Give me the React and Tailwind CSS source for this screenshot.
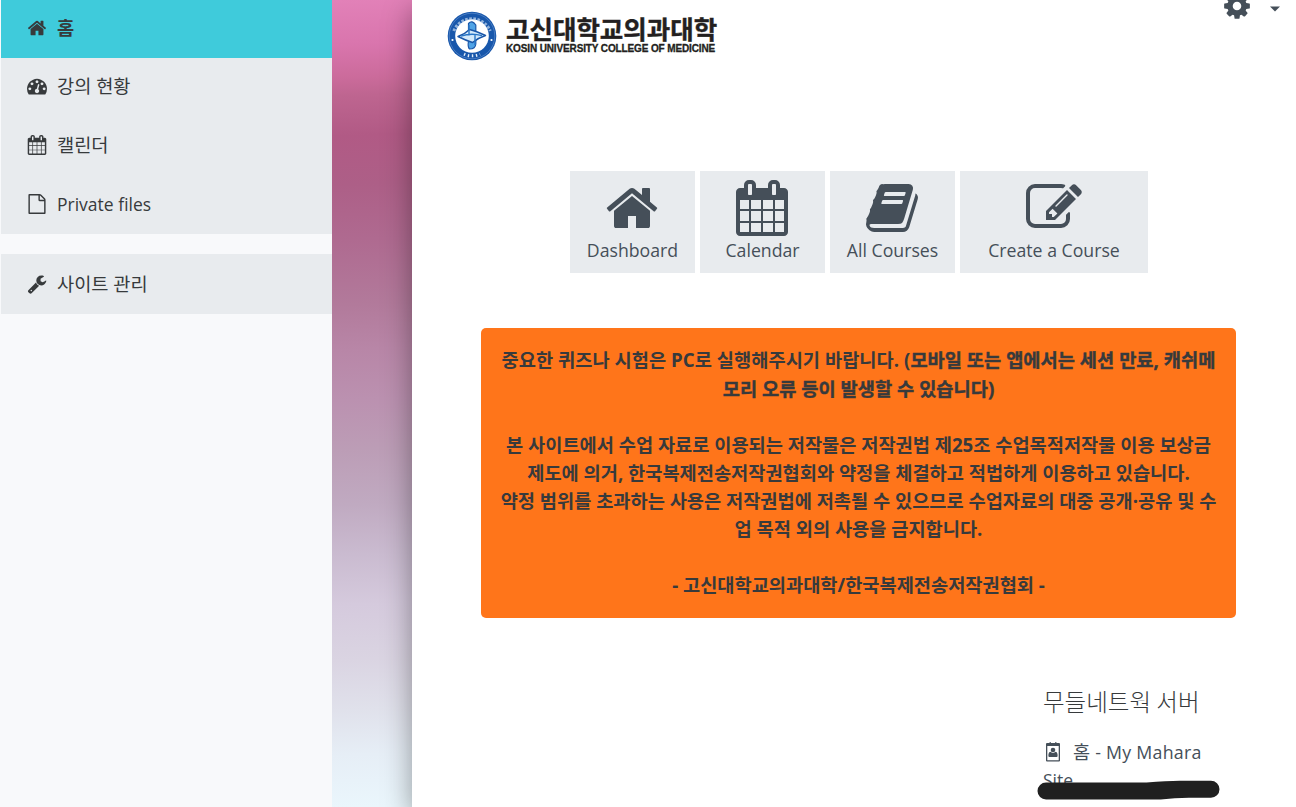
import React from "react";

const ICONS = {
  home: "M1472 992v480q0 26-19 45t-45 19h-384v-384h-256v384h-384q-26 0-45-19t-19-45v-480q0-1 .5-3t.5-3l575-474 575 474q1 2 1 6zm223-69l-62 74q-8 9-21 11h-3q-13 0-21-7l-692-577-692 577q-12 8-24 7-13-2-21-11l-62-74q-8-10-7-23.5t11-21.5l719-599q32-26 76-26t76 26l244 204v-195q0-14 9-23t23-9h192q14 0 23 9t9 23v408l219 182q10 8 11 21.5t-7 23.5z",
  calendar: "M192 1664h288v-288h-288v288zm352 0h320v-288h-320v288zm-352-352h288v-320h-288v320zm352 0h320v-320h-320v320zm-352-384h288v-288h-288v288zm736 736h320v-288h-320v288zm-384-736h320v-288h-320v288zm768 736h288v-288h-288v288zm-384-352h320v-320h-320v320zm-352-864v-288q0-13-9.5-22.5t-22.5-9.5h-64q-13 0-22.5 9.5t-9.5 22.5v288q0 13 9.5 22.5t22.5 9.5h64q13 0 22.5-9.5t9.5-22.5zm736 864h288v-320h-288v320zm-384-384h320v-288h-320v288zm384 0h288v-288h-288v288zm32-480v-288q0-13-9.5-22.5t-22.5-9.5h-64q-13 0-22.5 9.5t-9.5 22.5v288q0 13 9.5 22.5t22.5 9.5h64q13 0 22.5-9.5t9.5-22.5zm384-64v1280q0 52-38 90t-90 38h-1408q-52 0-90-38t-38-90v-1280q0-52 38-90t90-38h128v-96q0-66 47-113t113-47h64q66 0 113 47t47 113v96h384v-96q0-66 47-113t113-47h64q66 0 113 47t47 113v96h128q52 0 90 38t38 90z",
  book: "M1703 478q40 57 18 129l-275 906q-19 64-76.5 107.5t-122.5 43.5h-923q-77 0-148.5-53.5t-99.5-131.5q-24-67-2-127 0-4 3-27t4-37q1-8-3-21.5t-3-19.5q2-11 8-21t16.5-23.5 16.5-23.5q23-38 45-91.5t30-91.5q3-10 .5-30t-.5-28q3-11 17-28t17-23q21-36 42-92t25-90q1-9-2.5-32t.5-28q4-13 22-30.5t22-22.5q19-26 42.5-84.5t27.5-96.5q1-8-3-25.5t-2-26.5q2-8 9-18t18-23 17-21q8-12 16.5-30.5t15-35 16-36 19.5-32 26.5-23.5 36-11.5 47.5 5.5l-1 3q38-9 51-9h761q74 0 114 56t18 130l-274 906q-36 119-71.5 153.5t-128.5 34.5h-869q-27 0-38 15-11 16-1 43 24 70 144 70h923q29 0 56-15.5t35-41.5l300-987q7-22 5-57 38 15 59 43zm-1064 2q-4 13 2 22.5t20 9.5h608q13 0 25.5-9.5t16.5-22.5l21-64q4-13-2-22.5t-20-9.5h-608q-13 0-25.5 9.5t-16.5 22.5zm-83 256q-4 13 2 22.5t20 9.5h608q13 0 25.5-9.5t16.5-22.5l21-64q4-13-2-22.5t-20-9.5h-608q-13 0-25.5 9.5t-16.5 22.5z",
  edit: "M888 1184l116-116-152-152-116 116v56h96v96h56zm440-720q-16-16-33 1l-350 350q-17 17-1 33t33-1l350-350q17-17 1-33zm80 594v190q0 119-84.5 203.5t-203.5 84.5h-832q-119 0-203.5-84.5t-84.5-203.5v-832q0-119 84.5-203.5t203.5-84.5h832q63 0 117 25 15 7 18 23 3 17-9 29l-49 49q-14 14-32 8-23-6-45-6h-832q-66 0-113 47t-47 113v832q0 66 47 113t113 47h832q66 0 113-47t47-113v-126q0-13 9-22l64-64q15-15 35-7t20 29zm-96-738l288 288-672 672h-288v-288zm444 132l-92 92-288-288 92-92q28-28 68-28t68 28l152 152q28 28 28 68t-28 68z",
  file: "M1596 380q28 28 48 76t20 88v1152q0 40-28 68t-68 28h-1344q-40 0-68-28t-28-68v-1600q0-40 28-68t68-28h896q40 0 88 20t76 48zm-444-244v376h376q-10-29-22-41l-313-313q-12-12-41-22zm384 1528v-1024h-416q-40 0-68-28t-28-68v-416h-768v1536h1280z",
  wrench: "M448 1472q0-26-19-45t-45-19-45 19-19 45 19 45 45 19 45-19 19-45zm644-420l-682 682q-37 37-90 37-52 0-91-37l-106-108q-38-36-38-90 0-53 38-91l681-681q39 98 114.5 173.5t173.5 114.5zm634-435q0 39-23 106-47 134-164.5 217.5t-258.5 83.5q-185 0-316.5-131.5t-131.5-316.5 131.5-316.5 316.5-131.5q58 0 121.5 16.5t107.5 46.5q16 11 16 28t-16 28l-293 169v224l193 107q5-3 79-48.5t135.5-81 70.5-35.5q15 0 23.5 10t8.5 25z",
  cog: "M1152 896q0-106-75-181t-181-75-181 75-75 181 75 181 181 75 181-75 75-181zm512-109v222q0 12-8 23t-20 13l-185 28q-19 54-39 91 35 50 107 138 10 12 10 25t-9 23q-27 37-99 108t-94 71q-12 0-26-9l-138-108q-44 23-91 38-16 136-29 186-7 28-36 28h-222q-14 0-24.5-8.5t-11.5-21.5l-28-184q-49-16-90-37l-141 107q-10 9-25 9-14 0-25-11-126-114-165-168-7-10-7-23 0-12 8-23 15-21 51-66.5t54-70.5q-27-50-41-99l-183-27q-13-2-21-12.5t-8-23.5v-222q0-12 8-23t19-13l186-28q14-46 39-92-40-57-107-138-10-12-10-24 0-10 9-23 26-36 98.5-107.5t94.5-71.5q13 0 26 10l138 107q44-23 91-38 16-136 29-186 7-28 36-28h222q14 0 24.5 8.5t11.5 21.5l28 184q49 16 90 37l142-107q9-9 24-9 13 0 25 10 129 119 165 170 7 8 7 22 0 12-8 23-15 21-51 66.5t-54 70.5q26 50 41 98l183 28q13 2 21 12.5t8 23.5z",
  gauge: "M384 1152q0-53-37.5-90.5t-90.5-37.5-90.5 37.5-37.5 90.5 37.5 90.5 90.5 37.5 90.5-37.5 37.5-90.5zm192-448q0-53-37.5-90.5t-90.5-37.5-90.5 37.5-37.5 90.5 37.5 90.5 90.5 37.5 90.5-37.5 37.5-90.5zm428 481l101-382q6-26-7.5-48.5t-38.5-29.5-48 6.5-30 39.5l-101 382q-60 5-107 43.5t-63 98.5q-20 77 20 146t117 89 146-20 89-117q16-60-6-117t-72-91zm660-33q0-53-37.5-90.5t-90.5-37.5-90.5 37.5-37.5 90.5 37.5 90.5 90.5 37.5 90.5-37.5 37.5-90.5zm-640-640q0-53-37.5-90.5t-90.5-37.5-90.5 37.5-37.5 90.5 37.5 90.5 90.5 37.5 90.5-37.5 37.5-90.5zm448 192q0-53-37.5-90.5t-90.5-37.5-90.5 37.5-37.5 90.5 37.5 90.5 90.5 37.5 90.5-37.5 37.5-90.5zm320 448q0 261-141 483-19 29-54 29h-1402q-35 0-54-29-141-221-141-483 0-182 71-348t191-286 286-191 348-71 348 71 286 191 191 286 71 348z",
};

function Icon({ name, className }) {
  return (
    <svg viewBox="0 0 1792 1792" fill="currentColor" className={className} aria-hidden="true">
      <path d={ICONS[name]} />
    </svg>
  );
}

function NavItem({ icon, children, className }) {
  return (
    <a className={"flex shrink-0 items-center gap-[10px] pl-[26px] whitespace-nowrap text-[#373a3c] " + className}>
      <Icon name={icon} className="size-5 shrink-0" />
      {children}
    </a>
  );
}

function Tile({ icon, label, className }) {
  return (
    <a className={"flex h-[102px] flex-col items-center bg-[#e8ebee] pt-[9px] text-[#454f59] " + className}>
      <Icon name={icon} className="mr-[1px] size-14 shrink-0" />
      <span className="whitespace-nowrap text-[17.7px] leading-[28px]">{label}</span>
    </a>
  );
}

function Emblem() {
  return (
    <svg viewBox="0 0 50 50" className="mt-[11px] size-[50px] shrink-0" aria-hidden="true">
      <circle cx="25" cy="25" r="24.3" fill="#1857ab" />
      <circle cx="25" cy="25" r="22.8" fill="none" stroke="#5b8bcb" strokeWidth=".7" />
      <circle cx="25" cy="25" r="16.8" fill="#fff" />
      <path d="M6.800 20A19.600 19.600 0 0 1 43.200 20" fill="none" stroke="#c4d8f0" strokeWidth="3" strokeDasharray="2.600 1.500" opacity=".7" />
      <path d="M17 43.200A20 20 0 0 0 33 43.200" fill="none" stroke="#e0ebf8" strokeWidth="3" strokeDasharray="1.400 2.600" />
      <g fill="#fff"><circle cx="5.500" cy="29" r="1.100" /><circle cx="44.500" cy="29" r="1.100" /></g>
      <path d="M21.500 12.500Q25 8.500 28.800 14V33Q28.500 38 22.500 38Q20.500 36 21.500 30z" fill="#4fa3e6" stroke="#1a56a8" strokeWidth="1.200" />
      <path d="M11 25.500Q18 23 22.500 18.500Q29 20 38.500 24.500Q31 27 25.500 31.500Q19 29.500 11 25.500z" fill="#d4e9fa" stroke="#1a56a8" strokeWidth="1.500" strokeLinejoin="round" />
      <path d="M22 14v10.500M28 24v10M14 25.200Q24 21.500 35 24.700" fill="none" stroke="#2874c5" strokeWidth="1.400" />
    </svg>
  );
}

export default function App() {
  return (
    <div className='flex h-[807px] w-[1296px] overflow-hidden bg-white font-["Open_Sans","Noto_Sans_CJK_KR",sans-serif] text-[18.67px] text-[#373a3c]'>
      <nav className="flex w-[332px] shrink-0 flex-col bg-[#f8f9fb] pl-px">
        <NavItem icon="home" className="h-[58px] bg-[#3fcbdb] pb-[2px] font-bold">홈</NavItem>
        <div className="flex h-[176px] flex-col bg-[#e8ebee]">
          <NavItem icon="gauge" className="h-[58px] pb-[2px]">강의 현황</NavItem>
          <NavItem icon="calendar" className="h-[59px] pb-[2px]">캘린더</NavItem>
          <NavItem icon="file" className="h-[59px] pb-[1px]"><span className="text-[17.5px]">Private files</span></NavItem>
        </div>
        <NavItem icon="wrench" className="mt-5 h-[60px] bg-[#e8ebee]">사이트 관리</NavItem>
      </nav>

      <div className="w-20 shrink-0 bg-[linear-gradient(178deg,#e281b8_0px,#d975ad_45px,#cb6b9b_78px,#be6590_96px,#b15a85_136px,#ad5f87_185px,#af6a90_240px,#b27a9b_305px,#b886a7_350px,#bb91b0_400px,#bc9db6_450px,#c0aac1_505px,#cabbd0_555px,#d5cadd_605px,#dad4e2_660px,#e0e1eb_710px,#e6eef6_755px,#eaf6fc_807px)]" />

      <main className="relative flex w-[884px] shrink-0 flex-col bg-white shadow-[0_10px_27px_rgba(0,0,0,0.38)]">
        <header className="flex h-[171px] shrink-0 items-start pl-[35px]">
          <Emblem />
          <div className="ml-[9px] mt-[14px] flex w-[215px] flex-col whitespace-nowrap text-[#231f20]">
            <span className='h-[29px] font-["Noto_Sans_CJK_KR",sans-serif] text-[25.5px] leading-[28px] font-bold [-webkit-text-stroke:0.4px_#231f20]'>고신대학교의과대학</span>
            <span className='mt-[1px] font-["Liberation_Sans",sans-serif] text-[10px] leading-[10px] font-bold tracking-[-0.13px] [-webkit-text-stroke:0.3px_#231f20]'>KOSIN UNIVERSITY COLLEGE OF MEDICINE</span>
          </div>
          <div className="-mt-[9px] ml-auto flex items-center gap-[17px] pr-[15px] text-[#454f59]">
            <Icon name="cog" className="size-[30px]" />
            <svg viewBox="0 0 12 6" className="mt-[6px] h-[6px] w-3" fill="currentColor"><path d="M1 .5h10l-5 5z" /></svg>
          </div>
        </header>

        <div className="flex gap-[5px] pl-[158px]">
          <Tile icon="home" label="Dashboard" className="w-[125px]" />
          <Tile icon="calendar" label="Calendar" className="w-[125px]" />
          <Tile icon="book" label="All Courses" className="w-[125px]" />
          <Tile icon="edit" label="Create a Course" className="w-[188px]" />
        </div>

        <section className="mt-[55px] ml-[69px] h-[290px] w-[755px] shrink-0 rounded-[5px] bg-[#ff751a] pt-[18px] text-center leading-[28px] font-bold whitespace-nowrap">
          <p className="mb-[1px] tracking-[0.04px]">중요한 퀴즈나 시험은 PC로 실행해주시기 바랍니다. (<span className="[-webkit-text-stroke:0.4px_#373a3c]">모바일 또는 앱에서는 세션 만료, 캐쉬메</span></p>
          <p className="tracking-[0.04px] [-webkit-text-stroke:0.4px_#373a3c]">모리 오류 등이 발생할 수 있습니다)</p>
          <p className="mt-[28px]">본 사이트에서 수업 자료로 이용되는 저작물은 저작권법 제25조 수업목적저작물 이용 보상금</p>
          <p>제도에 의거, 한국복제전송저작권협회와 약정을 체결하고 적법하게 이용하고 있습니다.</p>
          <p>약정 범위를 초과하는 사용은 저작권법에 저촉될 수 있으므로 수업자료의 대중 공개·공유 및 수</p>
          <p>업 목적 외의 사용을 금지합니다.</p>
          <p className="mt-[28px]">- 고신대학교의과대학/한국복제전송저작권협회 -</p>
        </section>

        <section className="mt-[66px] ml-[631px] w-[190px] text-[#454f59]">
          <h2 className='font-["Noto_Sans_CJK_KR",sans-serif] text-[23.5px] leading-[34px] font-light whitespace-nowrap text-[#373a3c]'>무들네트웍 서버</h2>
          <a className="mt-[20px] flex h-[28px] items-center whitespace-nowrap">
            <svg viewBox="0 0 16 20" className="mr-[12px] ml-[2px] h-5 w-4" fill="currentColor">
              <path fillRule="evenodd" d="M2 1H4.500V.2H6V1h4V.2h1.500V1H14q1 0 1 1v16.500q0 1-1 1H2q-1 0-1-1V2q0-1 1-1zM2.300 4v14.200h11.400V4z" />
              <circle cx="8" cy="8" r="2.300" />
              <path d="M5.200 9.800Q8 12 10.800 9.800q2 .7 1.800 4.200 0 1-1 1H4.400q-1 0-1-1-.2-3.500 1.800-4.200z" />
            </svg>
            <span>홈</span>
            <span className="ml-[5px] text-[17.8px] tracking-[0.25px]">- My Mahara</span>
          </a>
          <div className="relative h-[28px] text-[17.5px] leading-[28px]">
            Site
            <svg viewBox="0 0 184 20" className="absolute top-[14px] -left-[7px] h-5 w-[185px]" fill="#202020" preserveAspectRatio="none">
              <path d="M10 2.500H110Q130 1 143 .8H174a8.500 8.500 0 0 1 0 17H152Q138 18 124 19.500H10a8.500 8.500 0 0 1 0-17z" />
            </svg>
          </div>
        </section>
      </main>
    </div>
  );
}
